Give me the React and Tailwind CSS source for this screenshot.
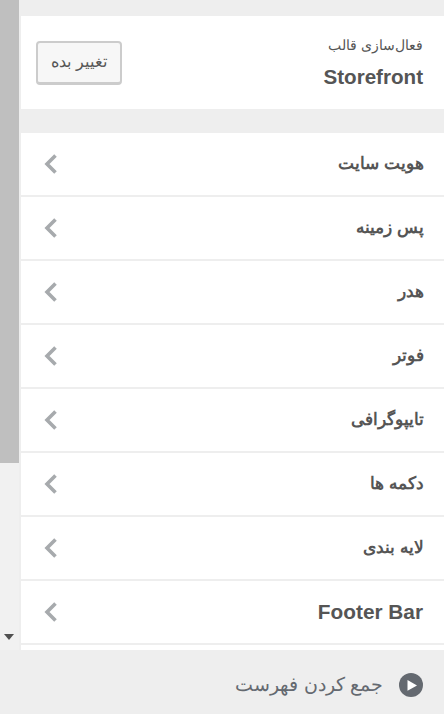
const sections = ['هویت سایت', 'پس زمینه', 'هدر', 'فوتر', 'تایپوگرافی', 'دکمه ها', 'لایه بندی'];

function Chevron() {
  return (
    <svg width="14" height="22" viewBox="0 0 14 22" fill="none">
      <path d="M11.5 2.5 L3 11 L11.5 19.5" stroke="#a7aaad" strokeWidth="3.6" />
    </svg>
  );
}

function SectionRow({ title, latin }) {
  return (
    <div className="mb-[2px] flex h-[62px] shrink-0 items-center justify-between bg-white pl-[23px] pr-[20px]">
      <Chevron />
      {latin ? (
        <h3 className="pr-[1px] text-[20.8px] font-bold text-[#555555]">{title}</h3>
      ) : (
        <h3 dir="rtl" className="-mt-[2px] text-[16.5px] font-bold text-[#555555]">{title}</h3>
      )}
    </div>
  );
}

function App() {
  return (
    <div className="flex h-[714px] w-[444px] flex-col overflow-hidden bg-[#eeeeee] font-['Liberation_Sans',sans-serif]">
      <div className="flex h-[650px] shrink-0">
        {/* fake scrollbar */}
        <div className="flex w-[19px] shrink-0 flex-col bg-[#f1f1f1]">
          <div className="h-[463px] bg-[#bfbfbf]"></div>
          <div className="mt-auto mb-[10px] flex justify-center pr-[2px]">
            <div className="h-0 w-0 border-x-[5.5px] border-t-[6px] border-x-transparent border-t-[#505050]"></div>
          </div>
        </div>

        <div className="ml-[2px] flex flex-1 flex-col overflow-hidden pt-[16px]">
          <div className="flex h-[93px] shrink-0 items-center justify-between bg-white pl-[15px] pr-[21px]">
            <button dir="rtl" className="h-[44px] w-[86px] rounded-[4px] border-2 border-b-[3px] border-[#cccccc] bg-[#f7f7f7] text-[16px] text-[#555555]">
              تغییر بده
            </button>
            <div className="flex flex-col items-end">
              <span dir="rtl" className="-mt-[2px] text-[14px] leading-[20px] text-[#555555]">فعال‌سازی قالب</span>
              <strong className="mt-[10px] text-[20.6px] leading-[24px] text-[#555555]">Storefront</strong>
            </div>
          </div>

          <div className="mt-[24px] flex flex-col">
            {sections.map((s) => (
              <SectionRow key={s} title={s} />
            ))}
            <SectionRow title="Footer Bar" latin />
            <div className="h-[5px] shrink-0 bg-white"></div>
          </div>
        </div>
      </div>

      <div className="flex h-[64px] shrink-0 items-center justify-end gap-[16px] pr-[21px] pt-[6px]">
        <span dir="rtl" className="mt-[1px] text-[19px] text-[#646970]">جمع کردن فهرست</span>
        <svg width="24" height="24" viewBox="0 0 24 24">
          <circle cx="12" cy="12" r="12" fill="#646970" />
          <path d="M8.5 7 L18 12.4 L8.5 17.8 Z" fill="#ffffff" />
        </svg>
      </div>
    </div>
  );
}

export default App;
